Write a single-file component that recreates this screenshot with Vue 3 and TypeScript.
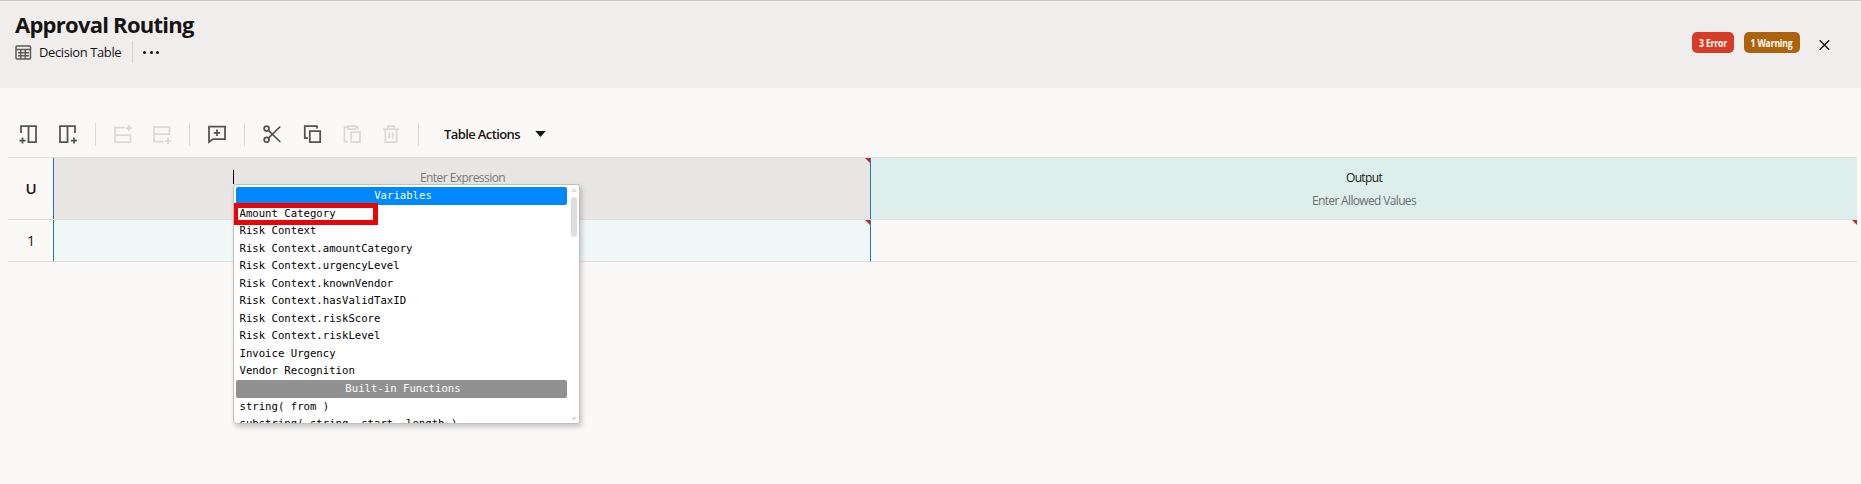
<script setup lang="ts">
interface Suggestion {
  label: string
  heading?: 'active' | 'muted'
  marked?: boolean
}

const suggestions: Suggestion[] = [
  { label: 'Variables', heading: 'active' },
  { label: 'Amount Category', marked: true },
  { label: 'Risk Context' },
  { label: 'Risk Context.amountCategory' },
  { label: 'Risk Context.urgencyLevel' },
  { label: 'Risk Context.knownVendor' },
  { label: 'Risk Context.hasValidTaxID' },
  { label: 'Risk Context.riskScore' },
  { label: 'Risk Context.riskLevel' },
  { label: 'Invoice Urgency' },
  { label: 'Vendor Recognition' },
  { label: 'Built-in Functions', heading: 'muted' },
  { label: 'string( from )' },
  { label: 'substring( string, start, length )' },
]
</script>

<template>
  <div class="page">
    <header class="header">
      <div class="heading">
        <h1>Approval Routing</h1>
        <div class="subtitle">
          <svg class="kind-icon" width="17" height="15" viewBox="0 0 17 15">
            <rect x="1" y="1" width="14.5" height="13" rx="1" />
            <path d="M1 4.5H15.5M3 7.7H14M3 10.8H14M5.7 4.5V14M10.3 4.5V14" />
          </svg>
          <span class="kind">Decision Table</span>
          <i class="rule"></i>
          <span class="dots"><i></i><i></i><i></i></span>
        </div>
      </div>
      <div class="status">
        <span class="badge error"><span>3 Error</span></span>
        <span class="badge warning"><span>1 Warning</span></span>
        <svg class="close" width="11" height="10" viewBox="0 0 11 10"><path d="M.7.3 10.2 9.7M10.2.3.7 9.7" /></svg>
      </div>
    </header>

    <nav class="toolbar">
      <svg class="tool" viewBox="0 0 24 24"><path d="M5 11V4H20V20H12.5V4M6.5 15.5V21.5M3.5 18.5H9.5" /></svg>
      <svg class="tool nudge" viewBox="0 0 24 24"><path d="M19 11V4H4V20H11.5V4M18 15.5V21.5M15 18.5H21" /></svg>
      <i class="sep"></i>
      <svg class="tool off" viewBox="0 0 24 24"><path d="M14 5.5H4V20H19.5V13H4M18 3V9M15 6H21" /></svg>
      <svg class="tool off" viewBox="0 0 24 24"><path d="M14 19.5H4V5H19.5V12H4M18 16V22M15 19H21" /></svg>
      <i class="sep"></i>
      <svg class="tool" viewBox="0 0 24 24"><path d="M4 4.5H20V17H8L4 20ZM12 7.5V14M8.8 10.8H15.2" /></svg>
      <i class="sep"></i>
      <svg class="tool" viewBox="0 0 24 24"><circle cx="6.6" cy="6.6" r="2.4" /><circle cx="6.6" cy="17.8" r="2.4" /><path d="M8.4 8.3 20.3 20M8.4 16.2 20.3 4.5" /></svg>
      <svg class="tool nudge" viewBox="0 0 24 24"><path d="M8 16H4.8V4H17V6.5M9.8 9.2H20.2V20H9.8Z" /></svg>
      <svg class="tool off nudge" viewBox="0 0 24 24"><path d="M8 19.5H4.5V5H7.5M16 5H18V8M8 4H15.5V7H8ZM11.2 10.2H20V20H11.2Z" /></svg>
      <svg class="tool off" viewBox="0 0 24 24"><path d="M4 7H20M6.3 7V20H17.7V7M9 6.5V4H15V6.5M10.3 10.5V16.5M13.7 10.5V16.5" /></svg>
      <i class="sep"></i>
      <span class="actions">Table Actions</span>
      <svg class="caret" width="11" height="6" viewBox="0 0 11 6"><path d="M.3 0H10.7L5.5 6Z" /></svg>
    </nav>

    <section class="table">
      <div class="cell policy">U</div>
      <div class="cell expression flagged">
        <span class="hint">Enter Expression</span>
        <i class="cursor"></i>
        <div class="popup">
          <div class="list">
            <div
              v-for="item in suggestions"
              :key="item.label"
              class="option"
              :class="[item.heading, { heading: item.heading, marked: item.marked }]"
            >{{ item.label }}</div>
          </div>
          <div class="scrollbar">
            <i class="up"></i>
            <i class="thumb"></i>
            <i class="down"></i>
          </div>
        </div>
      </div>
      <div class="cell output">
        <span class="name">Output</span>
        <span class="allowed">Enter Allowed Values</span>
      </div>
      <div class="cell index">1</div>
      <div class="cell input flagged"></div>
      <div class="cell result flagged"></div>
    </section>
  </div>
</template>

<style>
body {
  margin: 0;
  background: #fbf9f8;
}
</style>

<style scoped>
.page {
  height: 484px;
  overflow: hidden;
  background: #fbf9f8;
  color: #161513;
  font-family: 'Open Sans', 'Noto Sans', sans-serif;
}
.header {
  display: flex;
  justify-content: space-between;
  box-sizing: border-box;
  height: 88px;
  padding: 0 31px 0 15px;
  border-top: 1px solid #c8c6c4;
  background: #f0eeed;
}
h1 {
  margin: 8px 0 0;
  font-size: 22px;
  line-height: 30px;
  font-weight: 700;
  letter-spacing: -0.75px;
  white-space: nowrap;
}
.subtitle {
  display: flex;
  align-items: center;
  height: 22px;
  margin-top: 2px;
}
.kind-icon {
  fill: none;
  stroke: #5d5b59;
  stroke-width: 1.5;
}
.kind {
  width: 93px;
  margin-left: 7px;
  font-size: 13px;
  line-height: 20px;
  letter-spacing: -0.4px;
  white-space: nowrap;
}
.rule {
  width: 1px;
  height: 22px;
  background: #d5d3d1;
}
.dots {
  display: flex;
  gap: 3.5px;
  margin-left: 10px;
}
.dots i {
  width: 3px;
  height: 3px;
  border-radius: 50%;
  background: #161513;
}
.status {
  display: flex;
  align-items: center;
  height: 21px;
  margin-top: 31px;
}
.badge {
  display: flex;
  align-items: center;
  justify-content: center;
  height: 21px;
  border-radius: 5px;
  color: #fff;
  font-size: 10.5px;
  font-weight: 700;
  letter-spacing: -0.2px;
  white-space: nowrap;
}
.badge span {
  transform: scaleX(0.82);
}
.error {
  width: 42px;
  background: #d63b25;
}
.warning {
  width: 56px;
  margin-left: 10px;
  background: #ac630c;
}
.close {
  margin: 5px 0 0 19px;
  stroke: #161513;
  stroke-width: 1.4;
}
.toolbar {
  display: flex;
  align-items: center;
  gap: 15px;
  height: 24px;
  margin-top: 34px;
  padding-left: 16px;
}
.tool {
  width: 24px;
  height: 24px;
  fill: none;
  stroke: #55524f;
  stroke-width: 1.75;
}
.off {
  stroke: #dbd9d7;
}
.nudge {
  margin-left: 1px;
}
.sep {
  width: 1px;
  height: 23px;
  background: #dddbd9;
}
.actions {
  width: 76px;
  margin-left: 10px;
  font-size: 13px;
  font-weight: 600;
  letter-spacing: -0.6px;
  white-space: nowrap;
}
.caret {
  fill: #161513;
}
.table {
  display: grid;
  grid-template-columns: 46px 817px 986px;
  grid-template-rows: 62px 42px;
  width: 1849px;
  margin: 11px 0 0 8px;
  border-top: 1px solid #e0dedd;
}
.cell {
  position: relative;
  display: flex;
  align-items: center;
  justify-content: center;
  box-sizing: border-box;
  border-bottom: 1px solid #e0dedd;
}
.cell:nth-child(3n + 1)::after,
.cell:nth-child(3n + 2)::after {
  content: '';
  position: absolute;
  top: 0;
  right: 0;
  bottom: 0;
  width: 1px;
  background: #227e9e;
}
.policy {
  padding-bottom: 1px;
  font-size: 15px;
  font-weight: 600;
}
.index {
  padding-bottom: 1px;
  font-size: 14px;
}
.expression {
  align-items: flex-start;
  background: #e8e6e5;
}
.hint {
  margin: 11px 0 0;
  color: #7a7876;
  font-size: 12px;
  line-height: 18px;
  letter-spacing: -0.55px;
}
.cursor {
  position: absolute;
  left: 179px;
  top: 12px;
  width: 1px;
  height: 14px;
  background: #000;
}
.output {
  flex-direction: column;
  background: #deeeea;
}
.name,
.allowed {
  font-size: 12px;
  line-height: 23px;
  letter-spacing: -0.65px;
}
.allowed {
  color: #6b706d;
}
.input {
  background: #f0f7f7;
}
.flagged::before {
  content: '';
  position: absolute;
  top: 0;
  right: 0;
  width: 5px;
  height: 5px;
  background: #c1272d;
  clip-path: polygon(0 0, 100% 0, 100% 100%);
}
.expression::before,
.input::before {
  right: 1px;
}
.popup {
  position: absolute;
  z-index: 2;
  left: 179px;
  top: 26px;
  display: flex;
  box-sizing: border-box;
  width: 347px;
  height: 240px;
  padding: 2px 0 0 2px;
  overflow: hidden;
  border: 1px solid #c0c0c0;
  border-radius: 3px;
  background: #fff;
  box-shadow: 2px 3px 5px rgba(0, 0, 0, 0.2);
}
.list {
  flex: none;
  width: 331px;
}
.option {
  position: relative;
  height: 17.55px;
  padding-left: 3.5px;
  color: #000;
  font-family: 'DejaVu Sans Mono', monospace;
  font-size: 10.65px;
  line-height: 17.5px;
  white-space: pre;
}
.heading.option {
  padding: 0 0 0 3px;
  border-radius: 2px;
  color: #fff;
  text-align: center;
}
.active {
  background: #08f;
}
.muted {
  background: #919191;
}
.marked::after {
  content: '';
  position: absolute;
  left: -3px;
  top: -1.55px;
  box-sizing: border-box;
  width: 145px;
  height: 22px;
  border: 5px solid #e80505;
}
.heading {
  box-sizing: border-box;
}
.scrollbar {
  display: flex;
  flex-direction: column;
  align-items: center;
  width: 12px;
  padding: 0 0 2px 1px;
}
.up {
  border: 3px solid transparent;
  border-top: 0;
  border-bottom: 4px solid #dedede;
  margin-top: 1px;
}
.thumb {
  width: 6px;
  height: 40px;
  margin-top: 5px;
  border-radius: 3px;
  background: #dedede;
}
.down {
  border: 3px solid transparent;
  border-bottom: 0;
  border-top: 4px solid #dedede;
  margin-top: auto;
}
</style>
